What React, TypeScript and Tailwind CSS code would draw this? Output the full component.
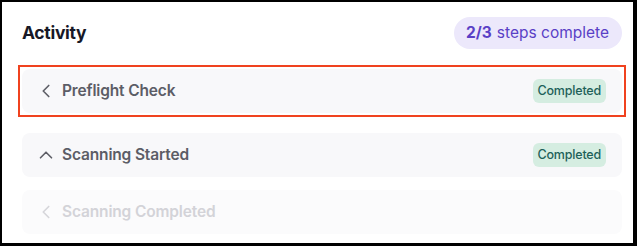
import React from 'react';
import { ChevronLeft, ChevronUp } from 'lucide-react';

interface StepRowProps {
  title: string;
  open?: boolean;
  done?: boolean;
  disabled?: boolean;
}

const StepRow: React.FC<StepRowProps> = ({ title, open = false, done = false, disabled = false }) => {
  const Icon = open ? ChevronUp : ChevronLeft;
  return (
    <div
      className={
        'flex h-[44px] items-center justify-between rounded-lg pl-[13px] pr-4 ' +
        (disabled ? 'bg-[#fbfbfc]' : 'bg-[#f8f8fa]')
      }
    >
      <div className="flex items-center gap-[5px]">
        <Icon size={22} strokeWidth={1.8} className={disabled ? 'text-[#d6d6da]' : 'text-[#5e5f67]'} />
        <span
          className={
            'text-[15.5px] font-semibold tracking-[-0.15px] ' + (disabled ? 'text-[#d3d3d8]' : 'text-[#5c5d66]')
          }
        >
          {title}
        </span>
      </div>
      {done && (
        <span className="flex h-6 items-center rounded-md bg-[#d5ede1] px-[5px] text-[12.5px] font-medium tracking-[-0.2px] text-[#1e6159]">
          Completed
        </span>
      )}
    </div>
  );
};

export default function App() {
  return (
    <div
      className="h-[246px] w-[637px] border-b-[3px] border-l-2 border-r-4 border-t-2 border-black bg-white pl-5 pr-[11px] pt-[15px]"
      style={{ fontFamily: 'Inter, "Noto Sans", sans-serif' }}
    >
      {/* Header */}
      <div className="flex items-center justify-between">
        <h2 className="text-[17.5px] font-bold tracking-[-0.3px] text-[#171826]">Activity</h2>
        <div className="flex h-8 items-center rounded-full bg-[#ece8fb] pl-3 pr-[13px] text-[15.5px] text-[#5a3fc6]">
          <span className="font-bold">2/3</span>
          <span className="ml-[5px]">steps complete</span>
        </div>
      </div>

      {/* Steps */}
      <div className="-mx-1 mt-4 border-2 border-[#f0421f] p-[2px]">
        <StepRow title="Preflight Check" done />
      </div>
      <div className="mt-4">
        <StepRow title="Scanning Started" open done />
      </div>
      <div className="mt-[13px]">
        <StepRow title="Scanning Completed" disabled />
      </div>
    </div>
  );
}
